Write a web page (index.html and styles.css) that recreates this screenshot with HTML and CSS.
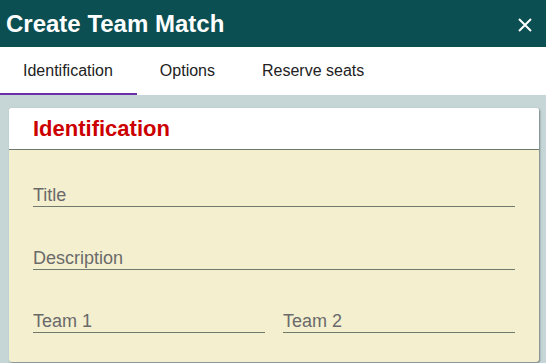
FILE: index.html
```html
<!DOCTYPE html>
<html lang="en">
<head>
    <meta charset="UTF-8">
    <title>Create Team Match</title>
    <link rel="stylesheet" href="styles.css">
</head>
<body>
    <div class="dialog">
        <div class="dialog-header">
            <h1>Create Team Match</h1>
            <button class="close-btn" aria-label="Close">
                <svg width="14" height="14" viewBox="0 0 14 14">
                    <path d="M1 1 L13 13 M13 1 L1 13" stroke="#fff" stroke-width="2" fill="none"/>
                </svg>
            </button>
        </div>

        <!-- Tabs -->
        <ul class="tabs">
            <li><a href="#" class="tab active">Identification</a></li>
            <li><a href="#" class="tab">Options</a></li>
            <li><a href="#" class="tab">Reserve seats</a></li>
        </ul>

        <div class="dialog-body">
            <div class="card">
                <div class="card-header">
                    <h2>Identification</h2>
                </div>
                <div class="card-body">
                    <div class="field">
                        <input type="text" class="field-input" placeholder="Title">
                    </div>
                    <div class="field">
                        <input type="text" class="field-input" placeholder="Description">
                    </div>
                    <div class="field-row">
                        <input type="text" class="field-input" placeholder="Team 1">
                        <input type="text" class="field-input" placeholder="Team 2">
                    </div>
                </div>
            </div>
        </div>
    </div>
</body>
</html>
```

FILE: styles.css
```css
:root {
    --header-color: #0b4f53;
    --tab-accent: #6b2fa8;
    --page-bg: #c6d6d6;
    --card-bg: #f4efcf;
    --title-red: #cc0000;
    --line-color: #6f7a6c;
}

* {
    margin: 0;
    padding: 0;
    box-sizing: border-box;
}

body {
    font-family: 'Liberation Sans', Arial, sans-serif;
    background-color: var(--page-bg);
    width: 546px;
    height: 363px;
    overflow: hidden;
}

.dialog {
    display: flex;
    flex-direction: column;
    height: 100%;
}

.dialog-header {
    flex-shrink: 0;
    height: 47px;
    background-color: var(--header-color);
    display: flex;
    align-items: center;
    justify-content: space-between;
    padding: 0 14px 0 6px;
}

.dialog-header h1 {
    color: white;
    font-size: 24px;
    font-weight: bold;
}

.close-btn {
    background: none;
    border: none;
    display: flex;
    cursor: pointer;
    margin-top: 2px;
}

.tabs {
    flex-shrink: 0;
    list-style: none;
    display: flex;
    height: 48px;
    background-color: white;
}

.tabs li {
    height: 100%;
}

.tab {
    display: flex;
    align-items: center;
    height: 100%;
    padding: 2px 24px 0 23px;
    color: #222;
    font-size: 16px;
    text-decoration: none;
    border-bottom: 2px solid transparent;
}

.tab.active {
    border-bottom-color: var(--tab-accent);
}

.dialog-body {
    flex-grow: 1;
    padding: 13px 7px 0 9px;
}

.card {
    background-color: var(--card-bg);
    border-radius: 3px;
    box-shadow: 1px 1px 2px rgba(60, 70, 70, 0.6);
    height: 254px;
    overflow: hidden;
}

.card-header {
    background-color: white;
    height: 42px;
    border-bottom: 1px solid var(--line-color);
    padding: 8px 24px 0;
}

.card-header h2 {
    color: var(--title-red);
    font-size: 22px;
    font-weight: bold;
}

.card-body {
    padding: 34px 24px 0;
}

.field {
    margin-bottom: 40px;
}

.field-row {
    display: flex;
    gap: 18px;
}

.field-input {
    width: 100%;
    height: 23px;
    border: none;
    border-bottom: 1px solid var(--line-color);
    background: transparent;
    font-family: inherit;
    font-size: 18px;
    color: #333;
    outline: none;
}

.field-input::placeholder {
    color: #6a6a6a;
}
```
